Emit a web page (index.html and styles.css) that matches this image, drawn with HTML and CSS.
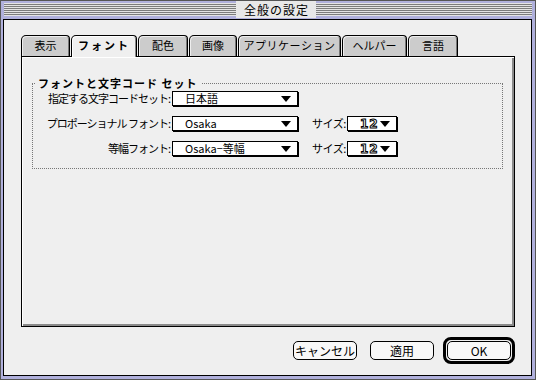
FILE: index.html
```html
<!DOCTYPE html>
<html lang="ja">
<head>
    <meta charset="UTF-8">
    <link rel="stylesheet" href="styles.css">
</head>
<body>
    <div class="window">
        <div class="titlebar">
            <span class="title">全般の設定</span>
        </div>
        <div class="content">
            <div class="tabs">
                <div class="tab w1">表示</div>
                <div class="tab w2 active">フォント</div>
                <div class="tab w3">配色</div>
                <div class="tab w4">画像</div>
                <div class="tab w5">アプリケーション</div>
                <div class="tab w6">ヘルパー</div>
                <div class="tab w7">言語</div>
            </div>
            <div class="panel">
                <fieldset class="group">
                    <legend>フォントと文字コード セット</legend>
                    <div class="row">
                        <div class="lbl">指定する文字コードセット:</div>
                        <div class="sel wide"><span>日本語</span><i class="arrow"></i></div>
                    </div>
                    <div class="row">
                        <div class="lbl">プロポーショナル フォント:</div>
                        <div class="sel wide"><span>Osaka</span><i class="arrow"></i></div>
                        <div class="size-lbl">サイズ:</div>
                        <div class="sel small"><span class="num">12</span><i class="arrow"></i></div>
                    </div>
                    <div class="row">
                        <div class="lbl">等幅フォント:</div>
                        <div class="sel wide"><span>Osaka−等幅</span><i class="arrow"></i></div>
                        <div class="size-lbl">サイズ:</div>
                        <div class="sel small"><span class="num">12</span><i class="arrow"></i></div>
                    </div>
                </fieldset>
            </div>
            <div class="buttons">
                <div class="btn">キャンセル</div>
                <div class="btn">適用</div>
                <div class="ring"><div class="btn">OK</div></div>
            </div>
        </div>
    </div>
</body>
</html>
```

FILE: styles.css
```css
body{
    margin: 0;
    font-family: "Noto Sans CJK JP", "DejaVu Sans", sans-serif;
    color: #000;
}
.window{
    width: 536px;
    height: 380px;
    box-sizing: border-box;
    border: 1px solid #555;
    background: #b0b0dc;
    padding: 0 3px 3px 2px;
    display: flex;
    flex-direction: column;
}
.titlebar{
    height: 17px;
    margin-left: 1px;
    background: repeating-linear-gradient(to bottom, #e4e4e4 0 1px, #7c7c7c 1px 2px);
    background-color: #e4e4e4;
    background-clip: content-box;
    padding: 2px 0 2px;
    box-sizing: border-box;
    display: flex;
    justify-content: center;
    align-items: center;
    margin-bottom: 1px;
}
.title{
    background: #e8e8e8;
    font-size: 12px;
    line-height: 17px;
    letter-spacing: 1px;
    padding: 0 7px 0 8px;
    margin-left: 16px;
}
.content{
    flex: 1;
    border: 1px solid #000;
    background: #efefef;
    padding: 15px 16px 0 17px;
    display: flex;
    flex-direction: column;
}
.tabs{
    display: flex;
    height: 21px;
    font-size: 11px;
    position: relative;
    z-index: 1;
}
.tab{
    box-sizing: border-box;
    height: 21px;
    border: 1px solid #000;
    border-bottom: none;
    border-radius: 5px 4px 0 0;
    background: #cccccc;
    box-shadow: inset 1px 1px #eee, inset -1px 0 #777;
    text-align: center;
    line-height: 19px;
    margin-right: 1px;
}
.tab.active{
    background: #efefef;
    height: 22px;
    font-weight: bold;
    letter-spacing: 2px;
    box-shadow: inset 1px 1px #fff, inset -1px 0 #888;
}
.w1{ width: 49px; }
.w2{ width: 66px; }
.w3{ width: 50px; }
.w4{ width: 48px; }
.w5{ width: 103px; letter-spacing: 0.5px; }
.w6{ width: 65px; }
.w7{ width: 50px; }
.panel{
    width: 494px;
    height: 271px;
    box-sizing: border-box;
    border: 1px solid #000;
    box-shadow: inset 1px 1px #fff, inset -2px -2px #8a8a8a;
    padding: 20px 11px 0 10px;
}
.group{
    margin: 0;
    padding: 0;
    height: 92px;
    box-sizing: border-box;
    border: 1px dotted #777;
}
.group legend{
    font-size: 11px;
    font-weight: bold;
    letter-spacing: 1px;
    padding: 0 4px 0 3px;
    margin-left: 2px;
    line-height: 12px;
}
.row{
    display: flex;
    align-items: center;
    height: 16px;
    margin-top: 1px;
    margin-bottom: 9px;
    font-size: 11px;
}
.lbl{
    width: 137px;
    margin-right: 2px;
    text-align: right;
    white-space: nowrap;
    letter-spacing: -1px;
}
.sel{
    position: relative;
    box-sizing: border-box;
    height: 15px;
    border: 1px solid #000;
    box-shadow: 1px 1px #000;
    background: #fff;
    line-height: 13px;
    padding-left: 12px;
    white-space: nowrap;
}
.sel.wide{
    width: 126px;
}
.sel.small{
    width: 50px;
}
.size-lbl{
    margin-left: 14px;
    width: 35px;
    white-space: nowrap;
    letter-spacing: -0.5px;
}
.num{
    font-family: "DejaVu Sans", sans-serif;
    font-weight: bold;
    font-size: 12px;
    color: #fff;
    -webkit-text-stroke: 1px #000;
    letter-spacing: 1px;
}
.arrow{
    position: absolute;
    right: 6px;
    top: 4px;
    width: 0;
    height: 0;
    border-left: 5px solid transparent;
    border-right: 5px solid transparent;
    border-top: 6px solid #000;
}
.buttons{
    display: flex;
    justify-content: flex-end;
    align-items: center;
    margin-top: 10px;
    height: 27px;
}
.btn{
    box-sizing: border-box;
    width: 64px;
    height: 19px;
    border: 1px solid #000;
    border-radius: 5px;
    background: #f8f8f8;
    font-size: 12px;
    line-height: 17px;
    text-align: center;
    margin-left: 13px;
}
.ring{
    margin-left: 9px;
    border: 3px solid #000;
    border-radius: 8px;
    padding: 1px;
}
.ring .btn{
    margin-left: 0;
}
```
